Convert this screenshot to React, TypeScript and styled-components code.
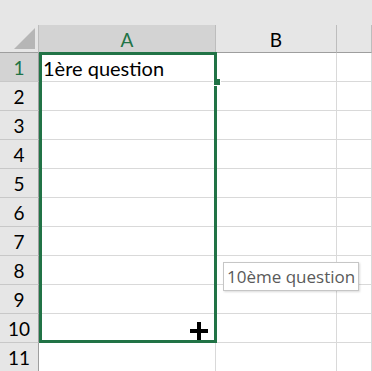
import React from 'react';
import styled, { createGlobalStyle } from 'styled-components';

const GlobalStyle = createGlobalStyle`
  html, body {
    margin: 0;
    padding: 0;
    background: #ffffff;
  }
  body {
    font-family: Lato, 'Liberation Sans', sans-serif;
    overflow: hidden;
  }
`;

const ROWS = 11;
const GREEN = '#217346';

const App: React.FC = () => {
  const rows = Array.from({ length: ROWS }, (_, i) => i + 1);

  return (
    <>
      <GlobalStyle />
      <Window>
        <TopBar />
        <Sheet>
          <Corner>
            <CornerTriangle />
          </Corner>
          <ColHeader selected>A</ColHeader>
          <ColHeader>B</ColHeader>
          <ColHeader />
          {rows.map((row) => (
            <React.Fragment key={row}>
              <RowHeader selected={row === 1}>{row}</RowHeader>
              <Cell>{row === 1 ? '1ère question' : ''}</Cell>
              <Cell />
              <Cell />
            </React.Fragment>
          ))}
          {/* drag range outline, fill handle, tooltip and cursor sit over the grid */}
          <Selection />
          <FillHandle />
          <Tooltip>10ème question</Tooltip>
          <PlusCursor viewBox='0 0 18 18' width='18' height='18'>
            <rect x='7' y='0' width='4' height='18' fill='#000' />
            <rect x='0' y='7' width='18' height='4' fill='#000' />
          </PlusCursor>
        </Sheet>
      </Window>
    </>
  );
};

export default App;

const Window = styled.div`
  width: 372px;
  height: 371px;
  overflow: hidden;
  background: #ffffff;
`;

const TopBar = styled.div`
  height: 25px;
  background: #e6e6e6;
`;

const Sheet = styled.div`
  position: relative;
  display: grid;
  grid-template-columns: 39px 177px 121px 1fr;
  grid-template-rows: 28px repeat(${ROWS}, 29px);
`;

const Corner = styled.div`
  position: relative;
  background: #e6e6e6;
  border-right: 1px solid #bdbdbd;
  border-bottom: 1px solid #9e9e9e;
  box-sizing: border-box;
`;

const CornerTriangle = styled.div`
  position: absolute;
  right: 3px;
  bottom: 3px;
  width: 0;
  height: 0;
  border-left: 21px solid transparent;
  border-bottom: 21px solid #b6b6b6;
`;

const ColHeader = styled.div<{ selected?: boolean }>`
  display: flex;
  align-items: center;
  justify-content: center;
  box-sizing: border-box;
  background: ${({ selected }) => (selected ? '#d3d3d3' : '#e6e6e6')};
  border-right: 1px solid #bdbdbd;
  border-bottom: 1px solid #9e9e9e;
  color: ${({ selected }) => (selected ? GREEN : '#000')};
  font-size: 19px;
  padding-top: 2px;
`;

const RowHeader = styled.div<{ selected?: boolean }>`
  display: flex;
  align-items: center;
  justify-content: center;
  box-sizing: border-box;
  background: ${({ selected }) => (selected ? '#d3d3d3' : '#e6e6e6')};
  border-right: 1px solid #9e9e9e;
  border-bottom: 1px solid #c8c8c8;
  color: ${({ selected }) => (selected ? GREEN : '#000')};
  font-size: 19px;
  padding-top: 1px;
`;

const Cell = styled.div`
  display: flex;
  align-items: center;
  box-sizing: border-box;
  border-right: 1px solid #d9d9d9;
  border-bottom: 1px solid #d9d9d9;
  padding: 2px 0 0 4px;
  font-size: 20px;
  color: #000;
  white-space: nowrap;
`;

const Selection = styled.div`
  position: absolute;
  left: 39px;
  top: 27px;
  width: 178px;
  height: 291px;
  box-sizing: border-box;
  border: 3px solid ${GREEN};
  pointer-events: none;
`;

const FillHandle = styled.div`
  position: absolute;
  left: 213px;
  top: 54px;
  width: 6px;
  height: 6px;
  background: ${GREEN};
  border: 1px solid #fff;
  border-top: none;
`;

const Tooltip = styled.div`
  position: absolute;
  left: 223px;
  top: 237px;
  height: 29px;
  padding: 0 3px 0 3px;
  box-sizing: border-box;
  display: flex;
  align-items: center;
  background: #fff;
  border: 1px solid #c6c6c6;
  box-shadow: 1px 1px 2px rgba(0, 0, 0, 0.15);
  font-family: 'Open Sans', sans-serif;
  font-size: 17px;
  color: #5a5a5a;
  white-space: nowrap;
`;

const PlusCursor = styled.svg`
  position: absolute;
  left: 190px;
  top: 297px;
`;
